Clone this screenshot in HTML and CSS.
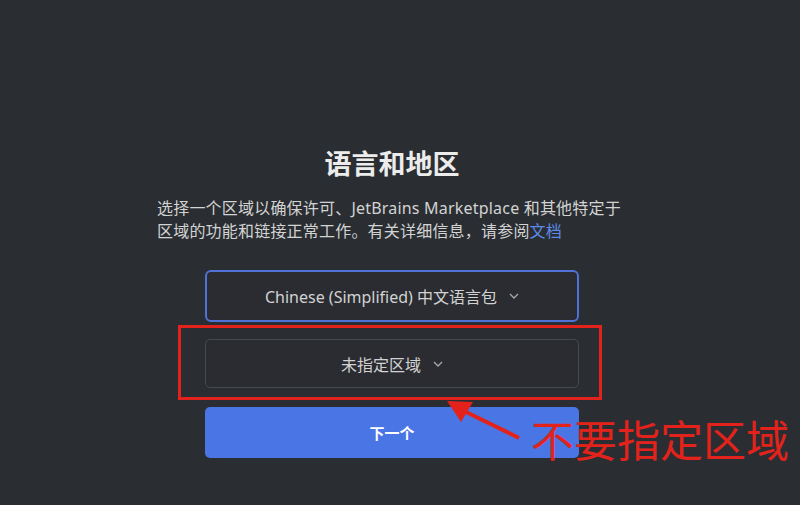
FILE: index.html
```html
<!DOCTYPE html>
<html lang="zh-CN">
<head>
    <meta charset="UTF-8">
    <meta name="viewport" content="width=device-width, initial-scale=1.0">
    <title>语言和地区</title>
    <link rel="stylesheet" href="styles.css">
</head>
<body>

    <main class="setup">
        <h1 class="setup-title">语言和地区</h1>
        <p class="setup-intro">
            选择一个区域以确保许可、JetBrains Marketplace 和其他特定于<br>
            区域的功能和链接正常工作。有关详细信息，请参阅<a href="#">文档</a>
        </p>

        <div class="fields">
            <button class="select select-active">
                Chinese (Simplified) 中文语言包
                <svg class="chevron" viewBox="0 0 10 6" width="10" height="6"><path d="M1 1l4 4 4-4" /></svg>
            </button>
            <button class="select">
                未指定区域
                <svg class="chevron" viewBox="0 0 10 6" width="10" height="6"><path d="M1 1l4 4 4-4" /></svg>
            </button>
            <button class="next-btn">下一个</button>
        </div>
    </main>

    <!-- annotation drawn over the screenshot -->
    <div class="note-box"></div>
    <svg class="note-arrow" viewBox="0 0 90 50" width="90" height="50">
        <line x1="22" y1="15" x2="79" y2="43" />
        <polygon points="7,6 33,7 21,27" />
    </svg>
    <div class="note-text">不要指定区域</div>

</body>
</html>
```

FILE: styles.css
```css
body {
    margin: 0;
    height: 505px;
    background-color: #2a2e32;
    font-family: "Noto Sans", "Noto Sans CJK SC", sans-serif;
    color: #d3d3d3;
    overflow: hidden;
}

.setup {
    width: 470px;
    margin-left: 157px;
    padding-top: 145px;
}

.setup-title {
    margin: 0;
    font-size: 27px;
    line-height: 36px;
    font-weight: bold;
    text-align: center;
    color: #ececec;
    font-family: "Noto Sans CJK SC", sans-serif;
}

.setup-intro {
    margin: 16px 0 0 0;
    font-size: 16px;
    line-height: 23px;
    letter-spacing: 0.2px;
    white-space: nowrap;
}

.setup-intro a {
    color: #5c8ae8;
    text-decoration: none;
}

.fields {
    width: 374px;
    margin-left: 48px;
    margin-top: 27px;
    display: flex;
    flex-direction: column;
}

.select {
    display: flex;
    justify-content: center;
    align-items: center;
    gap: 12px;
    height: 49px;
    margin-top: 17px;
    background-color: #2a2c31;
    border: 1px solid #46494e;
    border-radius: 5px;
    color: #d2d2d2;
    font-family: inherit;
    font-size: 16px;
    cursor: pointer;
}

.select-active {
    height: 52px;
    margin-top: 0;
    border: 2px solid #4f72d8;
    border-radius: 6px;
}

.chevron {
    fill: none;
    stroke: #a8a8a8;
    stroke-width: 1.3;
}

.next-btn {
    height: 51px;
    margin-top: 19px;
    background-color: #4a75e4;
    border: none;
    border-radius: 5px;
    color: #ffffff;
    font-family: inherit;
    font-size: 15px;
    font-weight: bold;
    cursor: pointer;
}

.note-box {
    position: absolute;
    left: 178px;
    top: 325px;
    width: 418px;
    height: 69px;
    border: 3px solid #e3231b;
}

.note-arrow {
    position: absolute;
    left: 440px;
    top: 395px;
}

.note-arrow line {
    stroke: #e3231b;
    stroke-width: 4;
}

.note-arrow polygon {
    fill: #e3231b;
}

.note-text {
    position: absolute;
    left: 531px;
    top: 413px;
    font-family: "Noto Sans CJK SC", sans-serif;
    font-size: 43px;
    line-height: 50px;
    color: #e3231b;
}
```
